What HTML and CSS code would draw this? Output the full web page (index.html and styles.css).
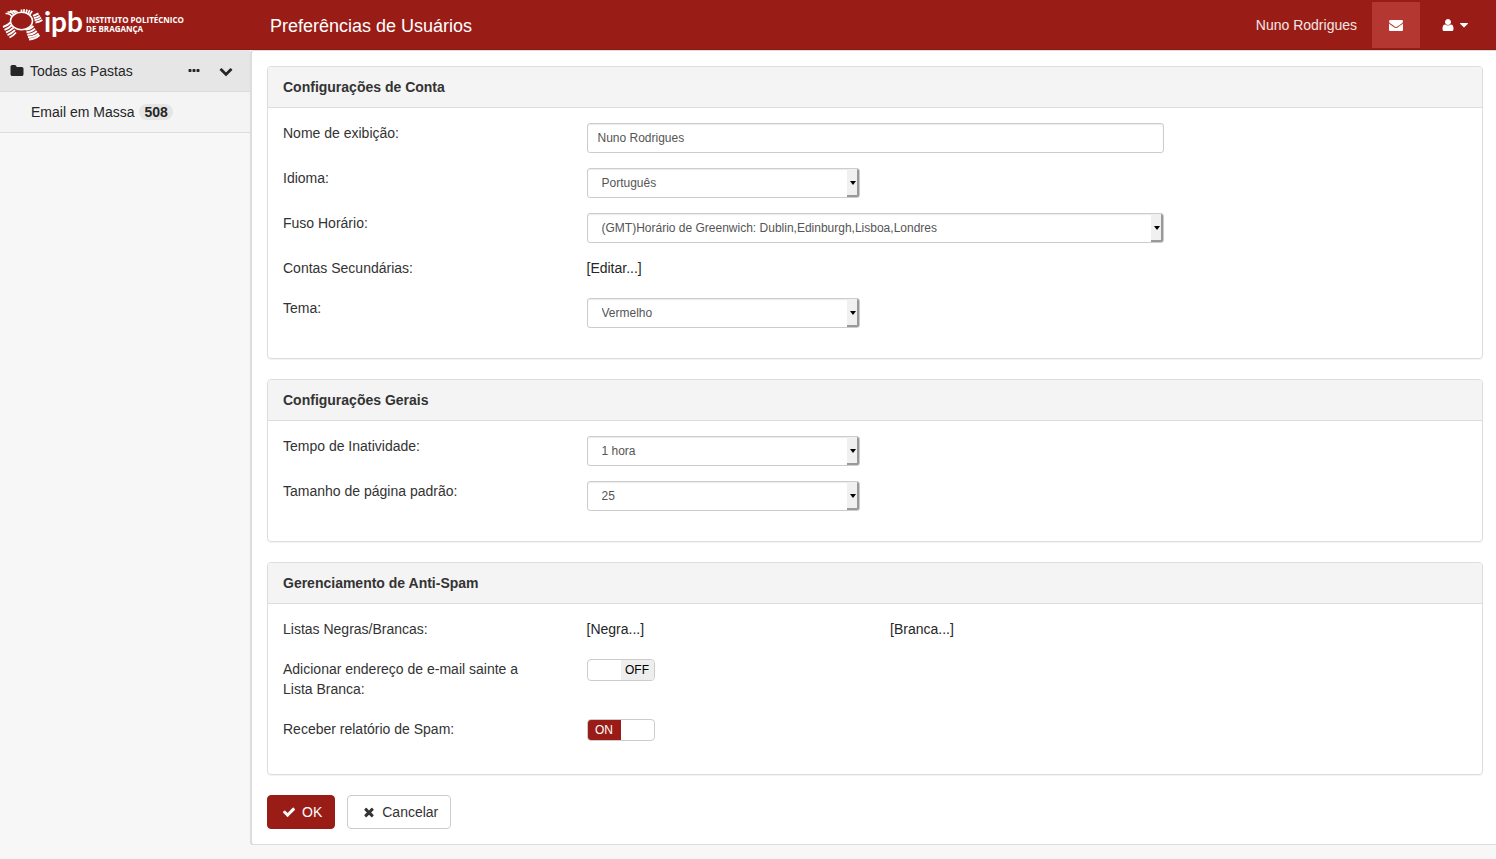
FILE: index.html
```html
<!DOCTYPE html>
<html lang="pt">
<head>
<meta charset="utf-8">
<meta name="viewport" content="width=device-width, initial-scale=1">
<title>Preferências de Usuários</title>
<link rel="stylesheet" href="styles.css">
</head>
<body>
<header class="topbar">
  <a class="brand" href="#" aria-label="Instituto Politécnico de Bragança">
    <svg class="logo" viewBox="0 0 200 50" width="200" height="50">
      <ellipse cx="21.500" cy="21" rx="11" ry="8.700" fill="none" stroke="#fff" stroke-width="1.500"/>
      <g fill="none" stroke="#fff" stroke-width="1.900">
        <path d="M3 27q4-1 7.500-4.500M4.500 29.800q4-1.200 7.500-4.800M6 32.500q4-1.200 7.500-4.800M7.500 35.200q4-1.500 7.500-5M9.500 37.500q3.500-1.500 6.500-5"/>
        <path d="M25.500 29.500q5-.3 8-3.500M26.500 32.200q5.500-.3 8.500-3.500M27.200 34.800q6-.3 9.500-3.800M28 37.200q6.500-.2 10.500-3.800M29 39.500q6.500-.5 10.500-4.500"/>
        <path d="M33 15.800l5.500-2.300M33.800 18q3.500 0 6-2.400M34.500 20.200q4 0 6.500-2.500M35.500 22.500q4-.3 6.800-2.500"/>
        <path d="M21.500 9.500v3.200M24.200 9.200l-.4 3.500M27 9.500l-1 4M29.700 10l-1.700 4M32.200 11l-2.700 4" stroke-width="1.700"/>
        <path d="M5.500 13.500q4.500-.5 6.500 3.500M7.500 12q5-.5 6.500 3.500M10 11q4.500 0 6 3M13 10.800q3.500 0 5 2" stroke-width="1.600"/>
      </g>
      <text class="logo-mark" x="44" y="32">ipb</text>
      <text class="logo-name" x="86" y="23">INSTITUTO POLITÉCNICO</text>
      <text class="logo-name" x="86" y="32">DE BRAGANÇA</text>
    </svg>
  </a>
  <h1 class="title">Preferências de Usuários</h1>
  <span class="user-name">Nuno Rodrigues</span>
  <button class="nav-btn nav-btn-active" type="button" aria-label="Email">
    <svg class="icon" viewBox="0 0 1792 1792"><path d="M1792 710v794q0 66-47 113t-113 47h-1472q-66 0-113-47t-47-113v-794q44 49 101 87 362 246 497 345 57 42 92.500 65.500t94.500 48 110 24.500h2q51 0 110-24.500t94.500-48 92.500-65.500q170-123 498-345 57-39 100-87zm0-294q0 79-49 151t-122 123q-376 261-468 325-10 7-42.500 31t-54 38-52 31.500-57.500 27-50 9h-2q-23 0-50-9t-57.500-27-52-31.500-54-38-42.500-31q-91-64-262-182.500t-205-142.500q-62-42-117-115.500t-55-136.500q0-78 41.500-130t118.500-52h1472q65 0 112.500 47t47.500 113z"/></svg>
  </button>
  <button class="nav-btn nav-btn-user" type="button" aria-label="Conta">
    <svg class="icon" viewBox="0 0 1792 1792"><path d="M1600 1399q0 109-62.500 187t-150.500 78h-982q-88 0-150.500-78t-62.500-187q0-85 8.500-160.500t31.500-152 58.500-131 94-89 198.500-34.500q131 128 313 128t313-128q140 0 198.500 34.500t94 89 58.500 131 31.500 152 8.500 160.500zm-320-887q0 159-112.500 271.500t-271.500 112.500-271.500-112.500-112.500-271.500 112.500-271.500 271.500-112.500 271.500 112.500 112.500 271.500z"/></svg>
    <svg class="icon" viewBox="0 0 1792 1792"><path d="M1408 704q0 26-19 45l-448 448q-19 19-45 19t-45-19l-448-448q-19-19-19-45t19-45 45-19h896q26 0 45 19t19 45z"/></svg>
  </button>
</header>
<div class="layout">
  <nav class="sidebar">
    <div class="folder-head">
      <svg class="icon" viewBox="0 0 1792 1792"><path d="M1728 608v704q0 92-66 158t-158 66h-1216q-92 0-158-66t-66-158v-960q0-92 66-158t158-66h320q92 0 158 66t66 158v32h672q92 0 158 66t66 158z"/></svg>
      <a class="folder-link" href="#">Todas as Pastas</a>
      <button class="icon-btn" type="button" aria-label="Mais opções">
        <svg class="icon" viewBox="0 0 1792 1792"><path d="M576 736v192q0 40-28 68t-68 28h-192q-40 0-68-28t-28-68v-192q0-40 28-68t68-28h192q40 0 68 28t28 68zm512 0v192q0 40-28 68t-68 28h-192q-40 0-68-28t-28-68v-192q0-40 28-68t68-28h192q40 0 68 28t28 68zm512 0v192q0 40-28 68t-68 28h-192q-40 0-68-28t-28-68v-192q0-40 28-68t68-28h192q40 0 68 28t28 68z"/></svg>
      </button>
      <button class="icon-btn" type="button" aria-label="Recolher">
        <svg class="icon" viewBox="0 0 1792 1792"><path d="M1683 808l-742 741q-19 19-45 19t-45-19l-742-741q-19-19-19-45.500t19-45.500l166-165q19-19 45-19t45 19l531 531 531-531q19-19 45-19t45 19l166 165q19 19 19 45.500t-19 45.500z"/></svg>
      </button>
    </div>
    <a class="folder-item" href="#">Email em Massa <span class="badge">508</span></a>
  </nav>
  <main class="content">
    <form>
      <section class="panel">
        <h2 class="panel-heading">Configurações de Conta</h2>
        <div class="panel-body">
          <div class="row">
            <label class="label" for="nome">Nome de exibição:</label>
            <input class="field field-wide" id="nome" type="text" value="Nuno Rodrigues">
          </div>
          <div class="row">
            <label class="label" for="idioma">Idioma:</label>
            <div class="select"><select class="field" id="idioma"><option>Português</option></select></div>
          </div>
          <div class="row">
            <label class="label" for="fuso">Fuso Horário:</label>
            <div class="select field-wide"><select class="field" id="fuso"><option>(GMT)Horário de Greenwich: Dublin,Edinburgh,Lisboa,Londres</option></select></div>
          </div>
          <div class="row">
            <span class="label">Contas Secundárias:</span>
            <a class="edit-link" href="#">[Editar...]</a>
          </div>
          <div class="row">
            <label class="label" for="tema">Tema:</label>
            <div class="select"><select class="field" id="tema"><option>Vermelho</option></select></div>
          </div>
        </div>
      </section>
      <section class="panel">
        <h2 class="panel-heading">Configurações Gerais</h2>
        <div class="panel-body">
          <div class="row">
            <label class="label" for="tempo">Tempo de Inatividade:</label>
            <div class="select"><select class="field" id="tempo"><option>1 hora</option></select></div>
          </div>
          <div class="row">
            <label class="label" for="pagina">Tamanho de página padrão:</label>
            <div class="select"><select class="field" id="pagina"><option>25</option></select></div>
          </div>
        </div>
      </section>
      <section class="panel">
        <h2 class="panel-heading">Gerenciamento de Anti-Spam</h2>
        <div class="panel-body">
          <div class="row">
            <span class="label">Listas Negras/Brancas:</span>
            <a class="edit-link" href="#">[Negra...]</a>
            <a class="edit-link" href="#">[Branca...]</a>
          </div>
          <div class="row">
            <label class="label" for="sainte">Adicionar endereço de e-mail sainte a Lista Branca:</label>
            <div class="switch">
              <input class="switch-input" id="sainte" type="checkbox">
              <span class="switch-on">ON</span><span class="switch-off">OFF</span>
            </div>
          </div>
          <div class="row">
            <label class="label" for="spam">Receber relatório de Spam:</label>
            <div class="switch">
              <input class="switch-input" id="spam" type="checkbox" checked>
              <span class="switch-on">ON</span><span class="switch-off">OFF</span>
            </div>
          </div>
        </div>
      </section>
      <div class="actions">
        <button class="btn btn-primary" type="submit">
          <svg class="icon" viewBox="0 0 1792 1792"><path d="M1671 566q0 40-28 68l-724 724-136 136q-28 28-68 28t-68-28l-136-136-362-362q-28-28-28-68t28-68l136-136q28-28 68-28t68 28l294 295 656-657q28-28 68-28t68 28l136 136q28 28 28 68z"/></svg>OK
        </button>
        <button class="btn" type="button">
          <svg class="icon" viewBox="0 0 1792 1792"><path d="M1490 1322q0 40-28 68l-136 136q-28 28-68 28t-68-28l-294-294-294 294q-28 28-68 28t-68-28l-136-136q-28-28-28-68t28-68l294-294-294-294q-28-28-28-68t28-68l136-136q28-28 68-28t68 28l294 294 294-294q28-28 68-28t68 28l136 136q28 28 28 68t-28 68l-294 294 294 294q28 28 28 68z"/></svg>Cancelar
        </button>
      </div>
    </form>
  </main>
</div>
</body>
</html>
```
FILE: styles.css
```css
*,
*::before {
  box-sizing: border-box;
}

body {
  margin: 0;
  background: #f7f7f7;
  color: #333;
  font: 14px/20px "Liberation Sans", Arial, sans-serif;
}

a {
  color: inherit;
  text-decoration: none;
}

button,
input,
select {
  font: inherit;
  margin: 0;
}

.icon {
  width: 14px;
  height: 14px;
  flex: none;
  fill: currentColor;
}

.topbar {
  display: flex;
  align-items: center;
  height: 50px;
  background: #991d16;
  border-bottom: 1px solid #8c1a14;
  color: #fff;
}

.brand {
  width: 250px;
  flex: none;
}

.logo {
  display: block;
}

.logo-mark {
  fill: #fff;
  font: 700 28px Lato, sans-serif;
}

.logo-name {
  fill: #fff;
  font: 700 8px "Open Sans", sans-serif;
}

.title {
  flex: 1;
  margin: 0;
  padding: 2px 20px 0;
  font-size: 18px;
  font-weight: 400;
}

.user-name {
  padding-right: 15px;
  color: #f5e6e5;
}

.nav-btn {
  display: flex;
  align-items: center;
  justify-content: center;
  gap: 2px;
  width: 48px;
  height: 46px;
  padding: 0;
  border: 0;
  background: none;
  color: #fff;
}

.nav-btn-active {
  background: #b43731;
}

.nav-btn-user {
  width: 76px;
  padding-right: 4px;
}

.layout {
  display: flex;
  align-items: flex-start;
}

.sidebar {
  width: 250px;
  flex: none;
  color: #262626;
}

.folder-head {
  display: flex;
  align-items: center;
  height: 42px;
  padding: 0 15px 0 10px;
  background: #e6e6e6;
  border-bottom: 1px solid #dcdcdc;
}

.folder-link {
  flex: 1;
  padding-left: 6px;
}

.icon-btn {
  display: flex;
  padding: 0;
  margin-left: 14px;
  border: 0;
  background: none;
  color: #262626;
}

.icon-btn .icon {
  width: 18px;
}

.folder-item {
  display: flex;
  align-items: center;
  gap: 5px;
  height: 41px;
  padding-left: 31px;
  background: #f4f4f4;
  border-bottom: 1px solid #dcdcdc;
}

.badge {
  padding: 0 5px;
  border-radius: 8px;
  background: #e5e5e5;
  font-weight: 700;
  line-height: 16px;
}

.content {
  flex: 1;
  min-width: 0;
  padding: 15px 13px 15px 15px;
  border: solid #ddd;
  border-width: 1px 0 1px 2px;
  border-radius: 4px 0 0 4px;
  background: #fff;
  box-shadow: 0 1px 1px rgba(0, 0, 0, 0.1);
}

.panel {
  margin-bottom: 20px;
  border: 1px solid #ddd;
  border-radius: 4px;
  box-shadow: 0 1px 1px rgba(0, 0, 0, 0.05);
}

.panel-heading {
  margin: 0;
  padding: 10px 15px;
  border-bottom: 1px solid #ddd;
  border-radius: 3px 3px 0 0;
  background: #f4f4f4;
  font-size: 14px;
}

.panel-body {
  padding: 15px;
}

.row {
  display: grid;
  grid-template-columns: repeat(4, 1fr);
  align-items: start;
  column-gap: 30px;
  margin-bottom: 15px;
}

.label {
  margin-bottom: 5px;
  padding-right: 15px;
}

.field {
  display: block;
  width: 100%;
  height: 30px;
  padding: 0 10px;
  border: 1px solid #ccc;
  border-radius: 3px;
  background: #fff;
  box-shadow: inset 0 1px 1px rgba(0, 0, 0, 0.08);
  color: #555;
  font-size: 12px;
}

.field-wide {
  grid-column: span 2;
}

.select {
  position: relative;
}

.select .field {
  padding: 0 14px;
  appearance: none;
}

.select::before {
  content: "";
  position: absolute;
  top: 1px;
  right: 1px;
  bottom: 1px;
  width: 12px;
  border: solid #999;
  border-width: 0 2px 2px 0;
  border-radius: 0 2px 2px 0;
  background: #f0f0f0;
  pointer-events: none;
}

.select::after {
  content: "";
  position: absolute;
  top: 13px;
  right: 4px;
  border: solid transparent;
  border-width: 4px 3px 0;
  border-top-color: #000;
  pointer-events: none;
}

.edit-link {
  color: #262626;
}

.switch {
  position: relative;
  display: flex;
  width: 68px;
  height: 22px;
  overflow: hidden;
  border: 1px solid #ccc;
  border-radius: 4px;
  background: #fff;
  font-size: 12px;
  text-align: center;
}

.switch-input {
  position: absolute;
  inset: 0;
  width: 100%;
  height: 100%;
  opacity: 0;
}

.switch-on,
.switch-off {
  flex: 1;
}

.switch-on {
  background: #991d16;
  color: #fff;
}

.switch-off {
  background: #eee;
  color: #000;
}

.switch-input:checked ~ .switch-off,
.switch-input:not(:checked) ~ .switch-on {
  visibility: hidden;
}

.actions {
  display: flex;
  gap: 12px;
}

.btn {
  display: flex;
  align-items: center;
  gap: 6px;
  height: 34px;
  padding: 0 12px 0 14px;
  border: 1px solid #ccc;
  border-radius: 4px;
  background: #fff;
  color: #333;
}

.btn-primary {
  border-color: #991d16;
  background: #991d16;
  color: #fff;
}
```
